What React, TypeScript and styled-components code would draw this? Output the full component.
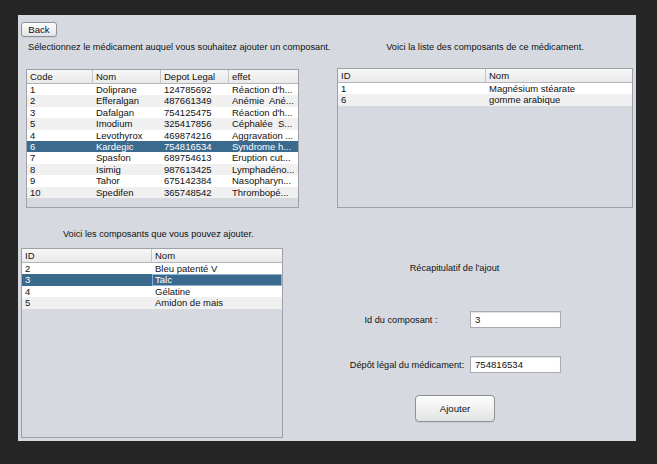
import React from "react";
import styled, { createGlobalStyle } from "styled-components";

const Global = createGlobalStyle`
  html, body { margin: 0; padding: 0; background: #262626; }
  body { font-family: "Liberation Sans", Arial, sans-serif; }
`;

const FONT = `"Liberation Sans", Arial, sans-serif`;

const Page = styled.div`
  width: 657px;
  height: 464px;
  padding: 15px 0 0 18px;
  box-sizing: border-box;
  background: #262626;
`;

const Panel = styled.div`
  width: 618px;
  height: 426px;
  background: #d6d9e0;
  display: flex;
  flex-direction: column;
  padding-top: 7px;
  box-sizing: border-box;
  font-family: ${FONT};
  font-size: 9.2px;
  color: #111;
`;

const BackRow = styled.div`
  display: flex;
  padding-left: 3px;
`;

const Button = styled.button<{ $w: number; $h: number; $r: number }>`
  width: ${(p) => p.$w}px;
  height: ${(p) => p.$h}px;
  border-radius: ${(p) => p.$r}px;
  border: 1px solid #8e9096;
  background: linear-gradient(#fdfdfd, #f1f1f1 50%, #e2e3e6);
  box-shadow: 0 1px 0 rgba(0, 0, 0, 0.06);
  font-family: ${FONT};
  font-size: 9.6px;
  color: #111;
  padding: 0;
  box-sizing: border-box;
`;

const Columns = styled.div`
  display: grid;
  grid-template-columns: 282px 336px;
`;

const Column = styled.div`
  display: flex;
  flex-direction: column;
`;

const Heading = styled.div<{ $ml: number; $mt: number; $center?: boolean; $w?: number }>`
  margin-left: ${(p) => p.$ml}px;
  margin-top: ${(p) => p.$mt}px;
  ${(p) => (p.$w ? `width: ${p.$w}px;` : "")}
  height: 12px;
  line-height: 12px;
  white-space: nowrap;
  text-align: ${(p) => (p.$center ? "center" : "left")};
`;

const TableBox = styled.div<{ $w: number; $h: number; $ml: number; $mt: number }>`
  width: ${(p) => p.$w}px;
  height: ${(p) => p.$h}px;
  margin-left: ${(p) => p.$ml}px;
  margin-top: ${(p) => p.$mt}px;
  border: 1px solid #9ea1a8;
  box-sizing: border-box;
  background: #d6d9e0;
  overflow: hidden;
  font-size: 9.5px;
`;

const HeaderRow = styled.div<{ $cols: string }>`
  display: grid;
  grid-template-columns: ${(p) => p.$cols};
  height: 14px;
  background: linear-gradient(#f7f7f7, #e9e9ea);
  border-bottom: 1px solid #b3b5ba;
  box-sizing: border-box;
`;

const HeaderCell = styled.div`
  padding-left: 3px;
  line-height: 13px;
  border-right: 1px solid #c2c4c8;
  white-space: nowrap;
  overflow: hidden;
  &:last-child { border-right: none; }
`;

const Row = styled.div<{ $cols: string; $alt: boolean; $sel: boolean }>`
  display: grid;
  grid-template-columns: ${(p) => p.$cols};
  height: 11.4px;
  background: ${(p) => (p.$sel ? "#3a6a8e" : p.$alt ? "#f0f0f0" : "#ffffff")};
  color: ${(p) => (p.$sel ? "#ffffff" : "#111")};
`;

const Cell = styled.div<{ $focus?: boolean }>`
  padding-left: 3px;
  line-height: 11.4px;
  white-space: pre;
  overflow: hidden;
  box-sizing: border-box;
  border: ${(p) => (p.$focus ? "1px solid #8db2d6" : "none")};
  ${(p) => (p.$focus ? "line-height: 9.4px; padding-left: 2px;" : "")}
`;

type TableProps = {
  w: number;
  h: number;
  ml: number;
  mt: number;
  cols: string;
  headers: string[];
  rows: string[][];
  selected?: number;
  focusCol?: number;
};

function Table({ w, h, ml, mt, cols, headers, rows, selected, focusCol }: TableProps) {
  return (
    <TableBox $w={w} $h={h} $ml={ml} $mt={mt}>
      <HeaderRow $cols={cols}>
        {headers.map((hd) => (
          <HeaderCell key={hd}>{hd}</HeaderCell>
        ))}
      </HeaderRow>
      {rows.map((r, i) => (
        <Row key={i} $cols={cols} $alt={i % 2 === 1} $sel={i === selected}>
          {r.map((c, j) => (
            <Cell key={j} $focus={i === selected && j === focusCol}>
              {c}
            </Cell>
          ))}
        </Row>
      ))}
    </TableBox>
  );
}

const FormBlock = styled.div`
  margin-left: 48px;
  margin-top: 54px;
  width: 213px;
  display: flex;
  flex-direction: column;
`;

const FormRow = styled.div<{ $mt: number }>`
  display: grid;
  grid-template-columns: 118px 91px;
  column-gap: 4px;
  align-items: center;
  margin-top: ${(p) => p.$mt}px;
`;

const Label = styled.div<{ $pr: number }>`
  text-align: center;
  padding-right: ${(p) => p.$pr}px;
  white-space: nowrap;
`;

const Input = styled.input`
  width: 91px;
  height: 17px;
  box-sizing: border-box;
  border: 1px solid #a9abb0;
  box-shadow: inset 0 1px 1px rgba(0, 0, 0, 0.12);
  background: #fff;
  font-family: ${FONT};
  font-size: 9.6px;
  padding: 0 0 0 4px;
  color: #111;
  outline: none;
`;

const ButtonRow = styled.div`
  margin-top: 22px;
  padding-left: 67px;
  display: flex;
`;

const meds = [
  ["1", "Doliprane", "124785692", "Réaction d'h..."],
  ["2", "Efferalgan", "487661349", "Anémie  Ané..."],
  ["3", "Dafalgan", "754125475", "Réaction d'h..."],
  ["5", "Imodium", "325417856", "Céphalée  S..."],
  ["4", "Levothyrox", "469874216", "Aggravation ..."],
  ["6", "Kardegic", "754816534", "Syndrome h..."],
  ["7", "Spasfon", "689754613", "Eruption cut..."],
  ["8", "Isimig", "987613425", "Lymphadéno..."],
  ["9", "Tahor", "675142384", "Nasopharyn..."],
  ["10", "Spedifen", "365748542", "Thrombopé..."],
];

const current = [
  ["1", "Magnésium stéarate"],
  ["6", "gomme arabique"],
];

const available = [
  ["2", "Bleu patenté V"],
  ["3", "Talc"],
  ["4", "Gélatine"],
  ["5", "Amidon de mais"],
];

export default function App() {
  return (
    <Page>
      <Global />
      <Panel>
        <BackRow>
          <Button $w={36} $h={15} $r={3}>Back</Button>
        </BackRow>
        <Columns>
          <Column>
            <Heading $ml={10} $mt={4}>
              Sélectionnez le médicament auquel vous souhaitez ajouter un composant.
            </Heading>
            <Table
              w={273}
              h={139}
              ml={8}
              mt={16}
              cols="66px 68px 68px 69px"
              headers={["Code", "Nom", "Depot Legal", "effet"]}
              rows={meds}
              selected={5}
            />
            <Heading $ml={45} $mt={20}>
              Voici les composants que vous pouvez ajouter.
            </Heading>
            <Table
              w={262}
              h={190}
              ml={3}
              mt={8}
              cols="130px 130px"
              headers={["ID", "Nom"]}
              rows={available}
              selected={1}
              focusCol={1}
            />
          </Column>
          <Column>
            <Heading $ml={37} $mt={4} $center $w={296}>
              Voici la liste des composants de ce médicament.
            </Heading>
            <Table
              w={296}
              h={140}
              ml={37}
              mt={15}
              cols="148px 146px"
              headers={["ID", "Nom"]}
              rows={current}
            />
            <FormBlock>
              <Heading $ml={0} $mt={0} $center>
                Récapitulatif de l'ajout
              </Heading>
              <FormRow $mt={37}>
                <Label $pr={12}>Id du composant :</Label>
                <Input defaultValue="3" readOnly />
              </FormRow>
              <FormRow $mt={28}>
                <Label $pr={0}>Dépôt légal du médicament:</Label>
                <Input defaultValue="754816534" readOnly />
              </FormRow>
              <ButtonRow>
                <Button $w={80} $h={27} $r={4}>Ajouter</Button>
              </ButtonRow>
            </FormBlock>
          </Column>
        </Columns>
      </Panel>
    </Page>
  );
}
